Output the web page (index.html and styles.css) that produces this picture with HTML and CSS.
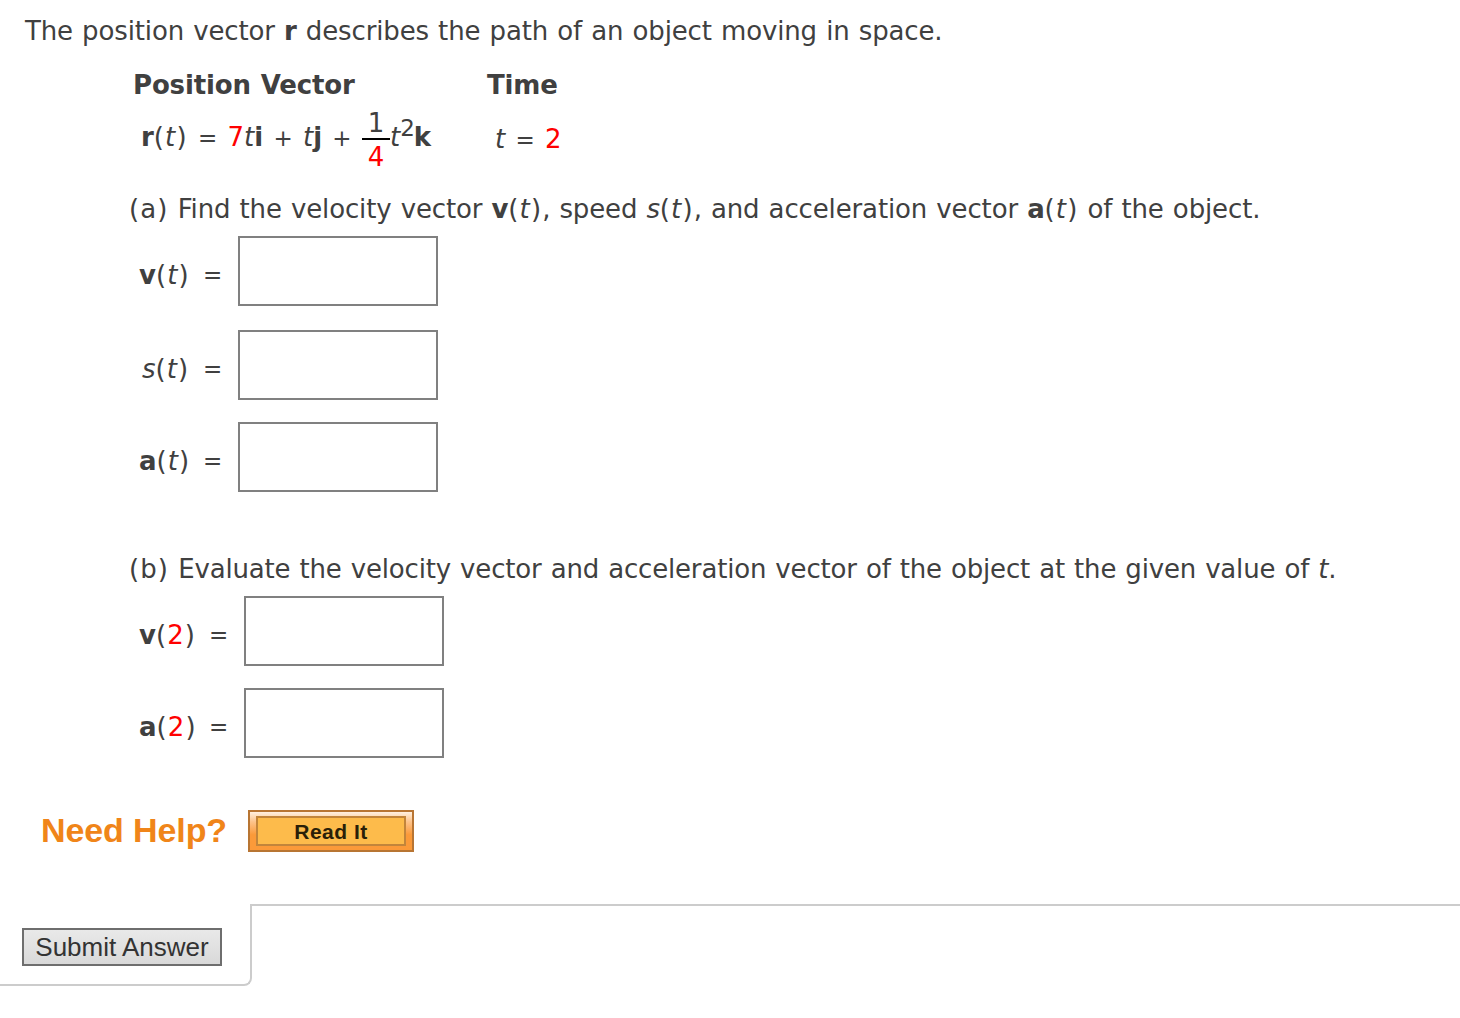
FILE: index.html
```html
<!DOCTYPE html>
<html lang="en">
<head>
  <meta charset="UTF-8" />
  <title>Position Vector</title>
  <link rel="stylesheet" href="styles.css">
</head>
<body>

  <div class="question">
    <p class="intro">The position vector <b>r</b> describes the path of an object moving in space.</p>

    <!-- given values -->
    <div class="given">
      <div class="head">Position Vector</div>
      <div class="head">Time</div>
      <div class="formula">
        <span class="lhs"><b>r</b><span class="arg">(<i>t</i>)</span> <span class="op">=</span> <span class="red">7</span><i>t</i><b>i</b> <span class="op">+</span> <i>t</i><b>j</b> <span class="op">+</span></span>
        <span class="frac"><span class="num">1</span><span class="den red">4</span></span>
        <span class="power"><i>t</i><sup>2</sup><b>k</b></span>
      </div>
      <div class="time"><i>t</i> <span class="op">=</span> <span class="red">2</span></div>
    </div>

    <!-- part a -->
    <div class="part">
      <p class="part-a"><span class="arg">(a)</span> Find the velocity vector <b>v</b><span class="arg">(<i>t</i>)</span>, speed <i>s</i><span class="arg">(<i>t</i>)</span>, and acceleration vector <b>a</b><span class="arg">(<i>t</i>)</span> of the object.</p>
      <div class="answer first"><label for="vt"><b>v</b><span class="arg">(<i>t</i>)</span></label><span class="eq op">=</span><input type="text" id="vt"></div>
      <div class="answer second"><label for="st"><i class="s">s</i><span class="arg">(<i>t</i>)</span></label><span class="eq op">=</span><input type="text" id="st"></div>
      <div class="answer"><label for="at"><b>a</b><span class="arg">(<i>t</i>)</span></label><span class="eq op">=</span><input type="text" id="at"></div>
    </div>

    <!-- part b -->
    <div class="part evaluate">
      <p class="part-b"><span class="arg">(b)</span> Evaluate the velocity vector and acceleration vector of the object at the given value of <i>t</i>.</p>
      <div class="answer first"><label for="v2"><b>v</b><span class="arg">(<span class="red">2</span>)</span></label><span class="eq op">=</span><input type="text" id="v2"></div>
      <div class="answer"><label for="a2"><b>a</b><span class="arg">(<span class="red">2</span>)</span></label><span class="eq op">=</span><input type="text" id="a2"></div>
    </div>

    <div class="help">
      <span class="help-title">Need Help?</span>
      <button class="read-btn"><span>Read It</span></button>
    </div>
  </div>

  <div class="footer">
    <div class="submit-box">
      <button class="submit-btn">Submit Answer</button>
    </div>
    <div class="footer-line"></div>
  </div>

</body>
</html>
```

FILE: styles.css
```css
body {
  margin: 0;
  background: #fff;
  color: #404040;
  font-family: Verdana, "DejaVu Sans", sans-serif;
  font-size: 26px;
  line-height: 32px;
  word-spacing: 1px;
  overflow: hidden;
}

p {
  margin: 0;
  white-space: nowrap;
  letter-spacing: -0.13px;
}

.red {
  color: #f00;
}

.arg {
  letter-spacing: 1.1px;
}

.op {
  font-size: 23px;
  padding: 0 1px;
}

.question {
  padding: 15px 0 0 24px;
}

.intro {
  padding-left: 1px;
}

.given {
  display: grid;
  grid-template-columns: 354px 200px;
  grid-template-rows: 32px 70px;
  margin: 22px 0 0 109px;
}

.head {
  font-weight: bold;
  letter-spacing: -0.15px;
  white-space: nowrap;
}

.formula {
  display: flex;
  padding-left: 8px;
  white-space: nowrap;
}

.lhs,
.power {
  padding-top: 20px;
}

.lhs {
  width: 221px;
}

.frac {
  width: 28px;
  padding-top: 6px;
  text-align: center;
}

.num,
.den {
  display: block;
}

.num {
  height: 31px;
  border-bottom: 2px solid #000;
}

.den {
  padding-top: 1px;
}

.power sup {
  font-size: 23px;
  line-height: 0;
  vertical-align: 10px;
}

.power b {
  margin-left: -1px;
}

.time {
  padding: 22px 0 0 8px;
}

.part {
  margin: 22px 0 0 105px;
}

.part-b {
  letter-spacing: -0.17px;
}

.answer {
  display: flex;
  align-items: center;
  height: 70px;
  margin-top: 22px;
  padding-left: 10px;
}

.answer.first {
  margin-top: 11px;
}

.answer.second {
  margin-top: 24px;
}

.answer label {
  width: 64px;
  padding-top: 7px;
  white-space: nowrap;
}

.answer .s {
  margin-left: 3px;
}

.answer .eq {
  width: 35px;
  padding: 7px 0 0;
  box-sizing: border-box;
}

.answer input {
  width: 200px;
  height: 70px;
  box-sizing: border-box;
  border: 2px solid #808080;
  border-radius: 0;
  background: #fff;
  padding: 4px;
  font: inherit;
}

.evaluate {
  margin-top: 61px;
}

.evaluate label {
  width: 70px;
}

/* help row */
.help {
  display: flex;
  align-items: center;
  height: 42px;
  margin: 52px 0 0 17px;
  word-spacing: 0;
}

.help-title {
  width: 207px;
  padding-bottom: 2px;
  color: #f08519;
  font: bold 34px/40px "Liberation Sans", Arial, sans-serif;
  letter-spacing: -0.1px;
  white-space: nowrap;
}

.read-btn {
  width: 166px;
  height: 42px;
  padding: 4px 6px;
  border: 2px solid #b87533;
  background: linear-gradient(#fff0e0, #fdc48c 25%, #fb9a39 60%, #fb9a39);
}

.read-btn span {
  display: block;
  box-sizing: border-box;
  height: 30px;
  border: 2px solid #c2853b;
  background: #fdbb4b;
  color: #2a1f08;
  font: bold 21px/28px "Liberation Sans", Arial, sans-serif;
  letter-spacing: 0.5px;
}

/* submit tab */
.footer {
  display: flex;
  margin-top: 52px;
  word-spacing: 0;
}

.submit-box {
  box-sizing: border-box;
  width: 252px;
  height: 82px;
  padding: 24px 0 0 22px;
  border: solid #ccc;
  border-width: 0 2px 2px 0;
  border-bottom-right-radius: 8px;
}

.submit-btn {
  display: block;
  width: 200px;
  height: 38px;
  padding: 0;
  border: 2px solid #6e6e6e;
  background: linear-gradient(#e9e9e9, #d9d9d9);
  color: #333;
  font: 26px/34px "Liberation Sans", Arial, sans-serif;
}

.footer-line {
  flex: 1;
  border-top: 2px solid #ccc;
}
```
